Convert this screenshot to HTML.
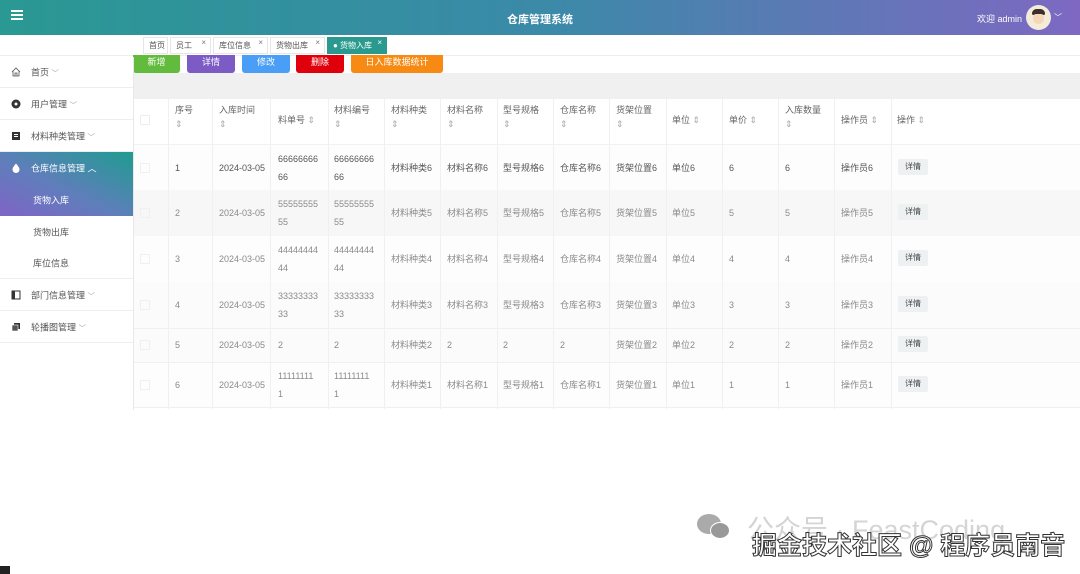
<!DOCTYPE html>
<html><head><meta charset="utf-8">
<style>
*{margin:0;padding:0;box-sizing:border-box}
body{width:1080px;height:574px;overflow:hidden;background:#fff;font-family:"Liberation Sans","Noto Sans CJK SC",sans-serif;font-size:9px;color:#666;position:relative}
.a{position:absolute}
.hdr{left:0;top:0;width:1080px;height:35px;background:linear-gradient(90deg,#2a9893 0%,#3a8aa8 50%,#7e68c2 100%)}
.tab{top:37px;height:17px;border:1px solid #e6e6e6;background:#fff;font-size:8px;line-height:15px;padding-left:5px;color:#555}
.tab i{font-style:normal;position:absolute;right:4px;top:-3px;font-size:8px;color:#777}
.btn{top:55px;height:18px;border-radius:0 0 3px 3px;color:#fff;text-align:center;line-height:15px;font-size:9px}
.side{left:0;width:133px;color:#555;font-size:9px;border-bottom:1px solid #eee}
.side span{position:absolute;left:31px;top:50%;transform:translateY(-50%)}
.ic{position:absolute;left:11px;top:50%;transform:translateY(-50%);width:10px;height:10px}
.cell{position:absolute;font-size:9px;line-height:20px}
.row{position:absolute;left:134px;width:946px}
.det{position:absolute;left:898px;width:30px;height:16px;background:#eef1f2;border-radius:2px;text-align:center;line-height:16px;color:#444;font-size:8px}
.vl{position:absolute;top:99px;height:310px;width:1px;background:#f0f0f0}
</style></head><body>
<div class="a hdr"></div>
<div class="a" style="left:11px;top:10px;width:12px;height:2px;background:#fff;box-shadow:0 4px 0 #fff,0 8px 0 #fff"></div>
<div class="a" style="left:0;width:1080px;top:11px;text-align:center;color:#fff;font-size:11px;font-weight:bold">仓库管理系统</div>
<div class="a" style="left:977px;top:12px;color:#fff;font-size:9px">欢迎 admin</div>
<div class="a" style="left:1026px;top:5px;width:25px;height:25px;border-radius:50%;background:#f3ecd9"><div class="a" style="left:6px;top:4px;width:13px;height:6px;background:#3a2f2a;border-radius:6px 6px 2px 2px"></div><div class="a" style="left:7px;top:9px;width:11px;height:10px;background:#f6d6b8;border-radius:3px 3px 5px 5px"></div></div>
<div class="a" style="left:1054px;top:12px;color:#fff;font-size:8px">﹀</div>
<div class="a" style="left:0;top:35px;width:1080px;height:21px;border-bottom:1px solid #eee"></div>
<div class="a tab" style="left:143px;width:25px">首页</div>
<div class="a tab" style="left:170px;width:41px">员工<i>×</i></div>
<div class="a tab" style="left:213px;width:55px">库位信息<i>×</i></div>
<div class="a tab" style="left:270px;width:55px">货物出库<i>×</i></div>
<div class="a tab" style="left:327px;width:60px;background:#2a9a8f;color:#fff;border-color:#2a9a8f">● 货物入库<i style="color:#fff">×</i></div>
<div class="a" style="left:133px;top:73px;width:947px;height:26px;background:#f0f0f0"></div>
<div class="a btn" style="left:133px;width:47px;background:#62bb3c">新增</div>
<div class="a btn" style="left:187px;width:48px;background:#7d5bc4">详情</div>
<div class="a btn" style="left:242px;width:48px;background:#4a9ef5">修改</div>
<div class="a btn" style="left:296px;width:48px;background:#e0000c">删除</div>
<div class="a btn" style="left:351px;width:92px;background:#f68a12">日入库数据统计</div>

<div class="a side" style="top:57px;height:31px"><svg class="ic" viewBox="0 0 10 10"><path d="M1 5L5 1 9 5M2 4V9H8V4M4 9V6H6V9" fill="none" stroke="#555" stroke-width="0.8"/></svg><span>首页 <small style="color:#aaa">﹀</small></span></div>
<div class="a side" style="top:88px;height:32px"><svg class="ic" viewBox="0 0 10 10"><circle cx="5" cy="5" r="4.5" fill="#333"/><circle cx="5" cy="5" r="1.5" fill="#fff"/></svg><span>用户管理 <small style="color:#aaa">﹀</small></span></div>
<div class="a side" style="top:120px;height:32px"><svg class="ic" viewBox="0 0 10 10"><rect x="1" y="1" width="8" height="8" fill="#333"/><rect x="3" y="3" width="4" height="1" fill="#fff"/><rect x="3" y="5" width="4" height="1" fill="#fff"/></svg><span>材料种类管理 <small style="color:#aaa">﹀</small></span></div>
<div class="a" style="left:0;top:152px;width:133px;height:64px;background:linear-gradient(to top right,#7f64c6,#5f7ebb 45%,#1e9c90)"></div>
<div class="a side" style="top:152px;height:32px;color:#fff;border:0"><svg class="ic" viewBox="0 0 10 10"><path d="M5 0.5C3 3 1.5 4.5 1.5 6.5A3.5 3.5 0 0 0 8.5 6.5C8.5 4.5 7 3 5 0.5Z" fill="#fff"/></svg><span>仓库信息管理 ︿</span></div>
<div class="a side" style="top:184px;height:32px;color:#fff;border:0"><span style="left:33px">货物入库</span></div>
<div class="a side" style="top:216px;height:32px;border:0"><span style="left:33px">货物出库</span></div>
<div class="a side" style="top:248px;height:31px"><span style="left:33px">库位信息</span></div>
<div class="a side" style="top:279px;height:32px"><svg class="ic" viewBox="0 0 10 10"><rect x="1" y="1" width="8" height="8" fill="none" stroke="#333"/><rect x="1" y="1" width="3" height="8" fill="#333"/></svg><span>部门信息管理 <small style="color:#aaa">﹀</small></span></div>
<div class="a side" style="top:311px;height:32px"><svg class="ic" viewBox="0 0 10 10"><rect x="3" y="1" width="6" height="6" fill="#333"/><rect x="1" y="3" width="6" height="6" fill="#555" stroke="#fff" stroke-width="0.6"/></svg><span>轮播图管理 <small style="color:#aaa">﹀</small></span></div>
<div class="a" style="left:133px;top:57px;width:1px;height:353px;background:#e8e8e8"></div>

<div class="row" style="top:99px;height:46px;background:#fff;border-bottom:1px solid #f2f2f2"></div>
<div class="row" style="top:145px;height:45px;background:#fdfdfd"></div>
<div class="row" style="top:190px;height:46px;background:#f7f7f7"></div>
<div class="row" style="top:236px;height:46px;background:#fdfdfd"></div>
<div class="row" style="top:282px;height:46px;background:#fbfbfb"></div>
<div class="row" style="top:328px;height:34px;background:#fbfbfb;border-top:1px solid #f0f0f0"></div>
<div class="row" style="top:362px;height:46px;background:#fdfdfd;border-top:1px solid #f0f0f0;border-bottom:1px solid #f0f0f0"></div>
<div class="vl" style="left:168px"></div><div class="vl" style="left:212px"></div><div class="vl" style="left:270px"></div><div class="vl" style="left:328px"></div><div class="vl" style="left:384px"></div><div class="vl" style="left:440px"></div><div class="vl" style="left:497px"></div><div class="vl" style="left:553px"></div><div class="vl" style="left:609px"></div><div class="vl" style="left:666px"></div><div class="vl" style="left:722px"></div><div class="vl" style="left:778px"></div><div class="vl" style="left:834px"></div><div class="vl" style="left:891px"></div>

<div id="t"></div>
<script>
var xs=[175,219,278,334,391,447,503,560,616,672,729,785,841,897];
var hd=[["序号",1],["入库时间",1],["料单号",0],["材料编号",1],["材料种类",1],["材料名称",1],["型号规格",1],["仓库名称",1],["货架位置",1],["单位",0],["单价",0],["入库数量",1],["操作员",0],["操作",0]];
var h="";
hd.forEach(function(c,i){
 if(c[1]) h+='<div class="cell" style="left:'+xs[i]+'px;top:103px;line-height:14px">'+c[0]+'<br><span style="color:#aaa">⇕</span></div>';
 else h+='<div class="cell" style="left:'+xs[i]+'px;top:110px">'+c[0]+' <span style="color:#aaa">⇕</span></div>';
});
h+='<div class="a" style="left:140px;top:115px;width:10px;height:10px;border:1px solid #eee"></div>';
var rows=[[145,45,6,"66666666<br>66"],[190,46,5,"55555555<br>55"],[236,46,4,"44444444<br>44"],[282,46,3,"33333333<br>33"],[328,34,2,"2"],[362,46,1,"11111111<br>1"]];
rows.forEach(function(r,k){
 var n=r[2],y=r[0],mid=y+r[1]/2,col=k==0?"#555":"#8a8a8a";
 var nm=n==2?"2":"材料名称"+n, xh=n==2?"2":"型号规格"+n, ck=n==2?"2":"仓库名称"+n;
 var v=[7-n,"2024-03-05",r[3],r[3],"材料种类"+n,nm,xh,ck,"货架位置"+n,"单位"+n,n,n,"操作员"+n];
 v.forEach(function(t,i){
  var two=String(t).indexOf("<br>")>=0;
  h+='<div class="cell" style="color:'+col+';left:'+xs[i]+'px;top:'+(two?mid-18:mid-10)+'px;line-height:'+(two?'18px':'20px')+'">'+t+'</div>';
 });
 h+='<div class="a" style="left:140px;top:'+(mid-5)+'px;width:10px;height:10px;border:1px solid #f0f0f0"></div>';
 h+='<div class="det" style="top:'+(mid-9)+'px">详情</div>';
});
document.getElementById("t").innerHTML=h;
</script>

<div class="a" style="left:697px;top:514px;width:24px;height:20px;border-radius:50%;background:#aaa"></div>
<div class="a" style="left:710px;top:522px;width:20px;height:17px;border-radius:50%;background:#999;border:1px solid #fff"></div>
<div class="a" style="left:747px;top:508px;font-size:27px;color:#d4d4d4;white-space:nowrap">公众号 · FeastCoding</div>
<div class="a" style="left:752px;top:526px;font-size:25px;color:#fff;-webkit-text-stroke:1px #333;font-weight:bold;white-space:nowrap">掘金技术社区 @ 程序员南音</div>
<div class="a" style="left:0;top:566px;width:10px;height:8px;background:#222"></div>
</body></html>
